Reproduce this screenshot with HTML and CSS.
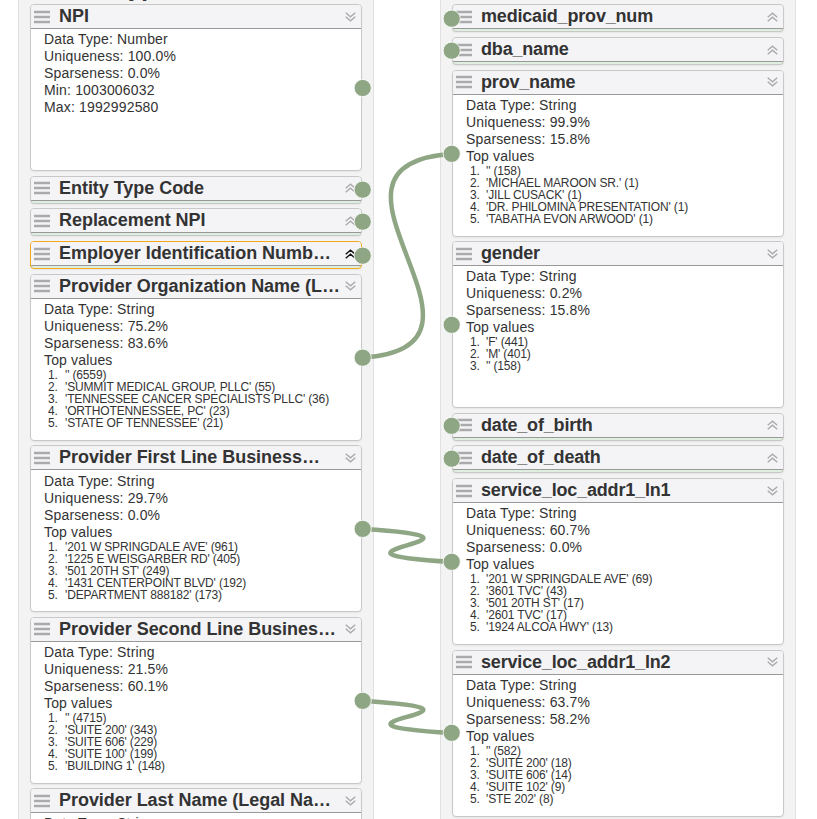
FILE: index.html
```
<!DOCTYPE html>
<html lang="en">
<head>
<meta charset="utf-8">
<title>Schema mapping</title>
<link rel="stylesheet" href="styles.css">
</head>
<body>
<svg class="defs" width="0" height="0">
  <symbol id="grip" viewBox="0 0 16 14"><path d="M0 2H16M0 7H16M0 12H16" stroke="#aaa" stroke-width="2.4"/></symbol>
  <symbol id="down" viewBox="0 0 11 10"><path d="M.7 .8L5.5 4.8L10.3 .8M.7 4.8L5.5 8.8L10.3 4.8" fill="none" stroke="currentColor" stroke-width="1.4"/></symbol>
  <symbol id="up" viewBox="0 0 11 10"><path d="M.7 5.2L5.5 1.2L10.3 5.2M.7 9.2L5.5 5.2L10.3 9.2" fill="none" stroke="currentColor" stroke-width="1.4"/></symbol>
</svg>
<main class="board" id="board">
  <section class="panel source" id="source"><div class="heading">Type</div></section>
  <section class="panel target" id="target"></section>
  <svg class="wires" width="817" height="819" fill="none">
    <g stroke="#8fa684" stroke-width="4.5">
      <path d="M363 357.5C525.5 347.5 287.5 164 452 154"/>
      <path d="M363 529C527 539 286 552 452 562"/>
      <path d="M363 701C527 711 286 723 452 733"/>
    </g>
    <g fill="#8fa684" stroke="#fff" stroke-opacity=".8" stroke-width="1">
      <circle cx="362.7" cy="88" r="8.6"/><circle cx="362.7" cy="189.7" r="8.6"/><circle cx="362.7" cy="221.7" r="8.6"/><circle cx="362.7" cy="255.7" r="8.6"/><circle cx="362.7" cy="357.7" r="8.6"/><circle cx="362.7" cy="528.9" r="8.6"/><circle cx="362.7" cy="700.8" r="8.6"/>
      <circle cx="451.7" cy="18.7" r="8.6"/><circle cx="451.7" cy="50.7" r="8.6"/><circle cx="451.7" cy="153.8" r="8.6"/><circle cx="451.7" cy="324.8" r="8.6"/><circle cx="451.7" cy="425.8" r="8.6"/><circle cx="451.7" cy="458.7" r="8.6"/><circle cx="451.7" cy="561.8" r="8.6"/><circle cx="451.7" cy="732.8" r="8.6"/>
    </g>
  </svg>
</main>
<script src="script.js"></script>
</body>
</html>
```
FILE: styles.css
```
* { box-sizing: border-box; }
body { margin: 0; background: #fff; color: #333; font-family: "Liberation Sans", Arial, sans-serif; overflow: hidden; }
.defs { position: absolute; }
.board { position: relative; height: 819px; padding: 0 21px 0 18px; display: flex; justify-content: space-between; overflow: hidden; }
.panel { width: 356px; height: 819px; padding: 4.2px 11px 0; background: #f3f3f3; border: solid #e0e0e0; border-width: 0 1px; display: flex; flex-direction: column; gap: 4.61px; overflow: hidden; }
.target { padding-top: 4.4px; }
.heading { flex: none; height: 24px; margin: -28.61px 0 0 85px; font-size: 24px; line-height: 24px; font-weight: bold; }
.card { flex: none; width: 332px; height: 167px; border: 1px solid #c8c8c8; border-radius: 4px; background: #fff; overflow: hidden; box-shadow: 0 1px 2px rgba(0,0,0,.06); }
.card.closed { height: 28px; background: #dfefdf; }
.card.active { border-color: #f5a81c; }
.head { height: 24px; padding: 0 5px 0 3px; display: flex; align-items: center; background: #f4f4f7; border-bottom: 1px solid #999; }
.grip { width: 16px; height: 14px; flex: none; }
.title { flex: 1; min-width: 0; margin-left: 9px; font-size: 18px; line-height: 23px; font-weight: bold; white-space: nowrap; letter-spacing: -.04px; }
.target .title { letter-spacing: -.18px; }
.toggle { width: 11px; height: 10px; flex: none; color: #aaa; }
.active .toggle { color: #111; }
.details { padding: 2.27px 0 0 13px; font-size: 14px; line-height: 17px; white-space: nowrap; }
.target .details, .card:last-child .details { padding-top: 2px; }
.source .card:last-child .details { padding-top: 1.7px; }
.stat { letter-spacing: .16px; }
.values { margin: 0; padding: 0; list-style: none; font-size: 12px; line-height: 12px; letter-spacing: -.15px; }
.values li { display: flex; }
.number { width: 21px; padding-left: 4px; flex: none; }
.target .number { width: 20px; }
.wires { position: absolute; left: 0; top: 0; }
```
FILE: script.js
```
const source = [
  ["NPI", ["Data Type: Number", "Uniqueness: 100.0%", "Sparseness: 0.0%", "Min: 1003006032", "Max: 1992992580"]],
  ["Entity Type Code"],
  ["Replacement NPI"],
  ["Employer Identification Numb…", null, null, true],
  ["Provider Organization Name (L…", ["Data Type: String", "Uniqueness: 75.2%", "Sparseness: 83.6%", "Top values"], ["'' (6559)", "'SUMMIT MEDICAL GROUP, PLLC' (55)", "'TENNESSEE CANCER SPECIALISTS PLLC' (36)", "'ORTHOTENNESSEE, PC' (23)", "'STATE OF TENNESSEE' (21)"]],
  ["Provider First Line Business…", ["Data Type: String", "Uniqueness: 29.7%", "Sparseness: 0.0%", "Top values"], ["'201 W SPRINGDALE AVE' (961)", "'1225 E WEISGARBER RD' (405)", "'501 20TH ST' (249)", "'1431 CENTERPOINT BLVD' (192)", "'DEPARTMENT 888182' (173)"]],
  ["Provider Second Line Busines…", ["Data Type: String", "Uniqueness: 21.5%", "Sparseness: 60.1%", "Top values"], ["'' (4715)", "'SUITE 200' (343)", "'SUITE 606' (229)", "'SUITE 100' (199)", "'BUILDING 1' (148)"]],
  ["Provider Last Name (Legal Na…", ["Data Type: String"]]
];
const target = [
  ["medicaid_prov_num"],
  ["dba_name"],
  ["prov_name", ["Data Type: String", "Uniqueness: 99.9%", "Sparseness: 15.8%", "Top values"], ["'' (158)", "'MICHAEL MAROON SR.' (1)", "'JILL CUSACK' (1)", "'DR. PHILOMINA PRESENTATION' (1)", "'TABATHA EVON ARWOOD' (1)"]],
  ["gender", ["Data Type: String", "Uniqueness: 0.2%", "Sparseness: 15.8%", "Top values"], ["'F' (441)", "'M' (401)", "'' (158)"]],
  ["date_of_birth"],
  ["date_of_death"],
  ["service_loc_addr1_ln1", ["Data Type: String", "Uniqueness: 60.7%", "Sparseness: 0.0%", "Top values"], ["'201 W SPRINGDALE AVE' (69)", "'3601 TVC' (43)", "'501 20TH ST' (17)", "'2601 TVC' (17)", "'1924 ALCOA HWY' (13)"]],
  ["service_loc_addr1_ln2", ["Data Type: String", "Uniqueness: 63.7%", "Sparseness: 58.2%", "Top values"], ["'' (582)", "'SUITE 200' (18)", "'SUITE 606' (14)", "'SUITE 102' (9)", "'STE 202' (8)"]]
];
function card([title, stats, values, active]) {
  const details = stats ? `<div class="details">${stats.map(s => `<div><span class="stat">${s}</span></div>`).join("")}${values ? `<ol class="values">${values.map((v, i) => `<li><span class="number">${i + 1}.</span><span class="value">${v}</span></li>`).join("")}</ol>` : ""}</div>` : "";
  return `<article class="card${stats ? "" : " closed"}${active ? " active" : ""}"><header class="head"><svg class="grip"><use href="#grip"/></svg><span class="title">${title}</span><svg class="toggle"><use href="#${stats ? "down" : "up"}"/></svg></header>${details}</article>`;
}
document.getElementById("source").insertAdjacentHTML("beforeend", source.map(card).join(""));
document.getElementById("target").insertAdjacentHTML("beforeend", target.map(card).join(""));
```
